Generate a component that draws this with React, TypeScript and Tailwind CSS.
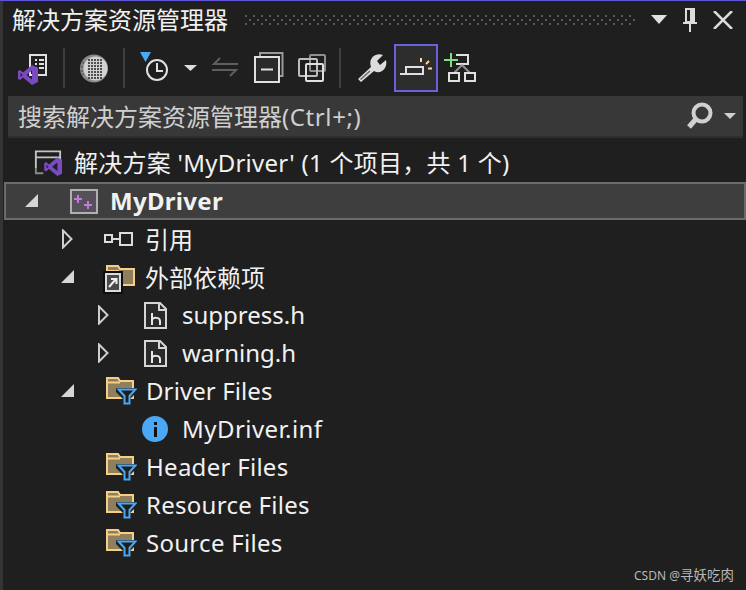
const FONT = "font-['Noto_Sans','Noto_Sans_CJK_SC',sans-serif]";

function VsLogo({ x, y, s = 1 }: { x: number; y: number; s?: number }) {
  return (
    <g transform={`translate(${x} ${y}) scale(${s})`} fill="#7a4bc0">
      <path d="M14 0 L20 3 V17 L14 20 L5 12.5 L2 15 L0 14 V6 L2 5 L5 7.5 Z M14 5.5 L8.5 10 L14 14.5 Z M2.5 8 V12 L4.5 10 Z" fillRule="evenodd" />
    </g>
  );
}

function Separator() {
  return <div className="h-[40px] w-[2px] bg-[#3f3f3f]" />;
}

function ToolIcon({ w, children }: { w: number; children: React.ReactNode }) {
  return (
    <svg width={w} height="48" viewBox={`0 0 ${w} 48`} fill="none" className="shrink-0">
      {children}
    </svg>
  );
}

function Toolbar() {
  return (
    <div className="flex h-[48px] items-center pl-[14px]">
      <ToolIcon w={36}>
        <path d="M16 11 H32 V31 H16 Z" fill="#1f1f1f" stroke="#e0e0e0" strokeWidth="2" />
        <path d="M21 16h2M25 16h5M21 20h2M25 20h5M21 24h2M25 24h5" stroke="#e0e0e0" strokeWidth="2" />
        <VsLogo x={4} y={21} />
      </ToolIcon>
      <div className="ml-[13px]"><Separator /></div>
      <div className="ml-[15px]">
        <ToolIcon w={30}>
          <circle cx="14" cy="24.500" r="14" fill="#8a8a8a" />
          <circle cx="15.500" cy="24.500" r="12" fill="#d2d2d2" />
          <path d="M3.500 18 A12 12 0 0 0 3.500 31" stroke="#5e5e5e" strokeWidth="2" strokeDasharray="2 2" />
          {[15, 18, 21, 24, 27, 30, 33].map((y) =>
            [8, 11, 14, 17, 20].map((x) => (
              <rect key={`${x}-${y}`} x={x} y={y} width="2" height="2" fill="#4f4f4f" />
            )),
          )}
        </ToolIcon>
      </div>
      <div className="ml-[13px]"><Separator /></div>
      <div className="ml-[15px]">
        <ToolIcon w={30}>
          <path d="M0 8 H11 L5.500 18 Z" fill="#4aa8f5" />
          <circle cx="17" cy="26" r="10" stroke="#e0e0e0" strokeWidth="2" />
          <path d="M17 19 V27 H23" stroke="#e0e0e0" strokeWidth="2" />
        </ToolIcon>
      </div>
      <div className="ml-[14px]">
        <ToolIcon w={13}>
          <path d="M0 21 H13 L6.500 27 Z" fill="#dcdcdc" />
        </ToolIcon>
      </div>
      <div className="ml-[14px]">
        <ToolIcon w={28}>
          <path d="M27 20 H3 L9 14 M1 26 H25 L19 32" stroke="#5f5f5f" strokeWidth="2" />
        </ToolIcon>
      </div>
      <div className="ml-[14px]">
        <ToolIcon w={32}>
          <path d="M7 13 V9 H29.500 V32 H26" stroke="#9a9a9a" strokeWidth="2" />
          <rect x="2" y="13" width="24" height="25" stroke="#e0e0e0" strokeWidth="2" fill="#2a2a2a" />
          <path d="M8 25.500 H20" stroke="#e0e0e0" strokeWidth="2" />
        </ToolIcon>
      </div>
      <div className="ml-[12px]">
        <ToolIcon w={30}>
          <rect x="13" y="11" width="15" height="16" rx="1" stroke="#8f8f8f" strokeWidth="2" />
          <rect x="2" y="15" width="18" height="17" rx="1" stroke="#bdbdbd" strokeWidth="2" />
          <rect x="9" y="20" width="17" height="17" rx="1" stroke="#e0e0e0" strokeWidth="2" />
        </ToolIcon>
      </div>
      <div className="ml-[12px]"><Separator /></div>
      <div className="ml-[14px]">
        <ToolIcon w={32}>
          <path d="M3 35 L16 23 C13 15 20 8 28 11 L22 17 L25 21 L31 16 C33 24 26 31 19 27 L6 38 Z" fill="#dcdcdc" />
          <path d="M5.500 35.500 L15 27" stroke="#6a6a6a" strokeWidth="1.500" />
        </ToolIcon>
      </div>
      <div className="ml-[7px] flex h-[48px] w-[44px] shrink-0 items-center justify-center border-2 border-[#6a5fe0] bg-[#2d2d2d]">
        <svg width="40" height="44" viewBox="0 0 40 44" fill="none">
          <path d="M4 28 H28" stroke="#e0e0e0" strokeWidth="2" />
          <path d="M10 27 V21 H27 V27" stroke="#e0e0e0" strokeWidth="2" />
          <path d="M25 12 V16" stroke="#ffd98c" strokeWidth="2" />
          <path d="M30 18 L33 15" stroke="#ffd98c" strokeWidth="2" />
          <path d="M32 22.500 H36" stroke="#ffd98c" strokeWidth="2" />
        </svg>
      </div>
      <div className="ml-[6px]">
        <ToolIcon w={34}>
          <path d="M7 9 V23 M0 16 H14" stroke="#7ee07e" strokeWidth="2" />
          <path d="M12 11 H24 V20 H12" stroke="#e0e0e0" strokeWidth="2" />
          <path d="M18 21 L10 29 M18 21 L26 29" stroke="#8f8f8f" strokeWidth="2" />
          <rect x="5" y="29" width="10" height="8" stroke="#e0e0e0" strokeWidth="2" />
          <rect x="21" y="29" width="10" height="8" stroke="#e0e0e0" strokeWidth="2" />
        </ToolIcon>
      </div>
    </div>
  );
}

function Arrow({ open }: { open?: boolean }) {
  if (open) {
    return (
      <svg width="14" height="14" viewBox="0 0 14 14">
        <path d="M0 13 H13 V0 Z" fill="#d6d6d6" />
      </svg>
    );
  }
  return (
    <svg width="11" height="20" viewBox="0 0 11 20" fill="none">
      <path d="M1 1.500 L9.500 10 L1 18.500 Z" stroke="#cfcfcf" strokeWidth="2" />
    </svg>
  );
}

function FilterFolder() {
  return (
    <svg width="31" height="30" viewBox="0 0 31 30" fill="none" className="-mr-[3px] shrink-0">
      <path d="M1 2 H12 L14 5 H27 V22 H1 Z" fill="#8f7f5c" stroke="#f5cf87" strokeWidth="2" />
      <path d="M2 6.500 H14" stroke="#f5cf87" strokeWidth="2" />
      <path d="M10 12 H31 V16 L24 23 V30 H17 V23 L10 16 Z" fill="#1f1f1f" />
      <path d="M12.500 13.500 H29.500 L23.500 20 V27.500 H18.500 V20 Z" fill="#1f1f1f" stroke="#4aa8f5" strokeWidth="2" />
    </svg>
  );
}

function HeaderFile() {
  return (
    <svg width="23" height="27" viewBox="0 0 23 27" fill="none" className="mr-[3px] shrink-0">
      <path d="M1 1 H16 L22 7 V26 H1 Z" fill="#2a2a2a" stroke="#d6d6d6" strokeWidth="2" />
      <path d="M15 1 V8 H22" stroke="#d6d6d6" strokeWidth="2" />
      <path d="M8 11 V23 M8 18 C9 15 16 15 16 19 V23" stroke="#e8e8e8" strokeWidth="2" />
    </svg>
  );
}

const TEXT = "ml-[12px] text-[24px] leading-[38px] text-[#f1f1f1] whitespace-pre";

function Row({
  lead,
  arrow,
  icon,
  text,
  textClass,
  selected,
}: {
  lead: string;
  arrow?: React.ReactNode;
  icon: React.ReactNode;
  text: string;
  textClass: string;
  selected?: boolean;
}) {
  return (
    <div
      className={
        selected
          ? "ml-[4px] flex h-[38px] items-center border-2 border-[#6b6b6b] bg-[#3e3e3e]"
          : "ml-[4px] flex h-[38px] items-center"
      }
    >
      <div className={lead}>{arrow}</div>
      {icon}
      <span className={`${TEXT} ${textClass}`}>{text}</span>
    </div>
  );
}

const FILES = ["Header Files", "Resource Files", "Source Files"];

export default function App() {
  return (
    <div className={`relative h-[590px] w-[746px] overflow-hidden border-t border-[#5f55d8] bg-[#1f1f1f] ${FONT}`}>
      <div className="absolute bottom-0 left-0 top-0 w-[3px] bg-[#343434]" />

      <div className="flex h-[37px] items-center pl-[12px]">
        <span className="text-[24px] leading-[38px] text-[#f1f1f1]">解决方案资源管理器</span>
        <svg width="390" height="10" className="ml-[17px]">
          <defs>
            <pattern id="grip" width="8" height="8" patternUnits="userSpaceOnUse">
              <rect x="0" y="0" width="2" height="2" fill="#5a5a5a" />
              <rect x="4" y="4" width="2" height="2" fill="#5a5a5a" />
            </pattern>
          </defs>
          <rect width="390" height="10" fill="url(#grip)" />
        </svg>
        <svg width="16" height="10" viewBox="0 0 16 10" className="ml-[16px]">
          <path d="M0 0 H16 L8 9 Z" fill="#e0e0e0" />
        </svg>
        <svg width="16" height="24" viewBox="0 0 16 24" fill="none" className="ml-[15px]">
          <path d="M4 1 H12 V14 H4 Z" stroke="#dcdcdc" strokeWidth="2" />
          <path d="M9.500 2 V14" stroke="#dcdcdc" strokeWidth="3" />
          <path d="M1 15 H15 M8 15 V24" stroke="#dcdcdc" strokeWidth="2" />
        </svg>
        <svg width="20" height="18" viewBox="0 0 20 18" fill="none" className="ml-[15px]">
          <path d="M1 0 L19 18 M19 0 L1 18" stroke="#dcdcdc" strokeWidth="2.500" />
        </svg>
      </div>

      <div className="mt-[6px]"><Toolbar /></div>

      <div className="ml-[8px] mt-[4px] flex h-[42px] w-[735px] items-center border-b-2 border-[#2e2e2e] bg-[#383838] pl-[10px]">
        <span className="flex-1 translate-y-px text-[24px] text-[#cfcfcf]">
          搜索解决方案资源管理器<span className="tracking-[0.6px]">(Ctrl+;)</span>
        </span>
        <svg width="28" height="28" viewBox="0 0 28 28" fill="none">
          <circle cx="16" cy="11" r="8.500" stroke="#d0d0d0" strokeWidth="4" />
          <path d="M10 17 L3 25" stroke="#d0d0d0" strokeWidth="5" />
        </svg>
        <svg width="12" height="6" viewBox="0 0 12 6" className="ml-[10px] mr-[7px]">
          <path d="M0 0 H12 L6 6 Z" fill="#d0d0d0" />
        </svg>
      </div>

      <div className="mt-[6px]">
        <Row
          lead="w-[30px]"
          icon={
            <svg width="28" height="28" viewBox="0 0 30 28" fill="none" className="shrink-0">
              <path d="M2 20 V1.500 H28 V12 M2 8 H28" stroke="#c4c4c4" strokeWidth="2" />
              <path d="M2 20 V25 H10" stroke="#8a8a8a" strokeWidth="2" />
              <VsLogo x={11} y={8} />
            </svg>
          }
          text="解决方案 'MyDriver' (1 个项目，共 1 个)"
          textClass="tracking-[0.25px]"
        />
        <Row
          selected
          lead="flex w-[64px] pl-[19px]"
          arrow={<Arrow open />}
          icon={
            <svg width="28" height="25" viewBox="0 0 28 25" fill="none" className="shrink-0">
              <rect x="1" y="1" width="26" height="23" fill="#55505a" stroke="#b0b0b0" strokeWidth="2" />
              <path d="M8 6 V14 M4 10 H12 M18 12 V20 M14 16 H22" stroke="#c27bd8" strokeWidth="2" />
            </svg>
          }
          text="MyDriver"
          textClass="font-bold tracking-[0.3px]"
        />
        <Row
          lead="flex w-[100px] items-center pl-[58px]"
          arrow={<Arrow />}
          icon={
            <svg width="30" height="14" viewBox="0 0 30 14" fill="none" className="shrink-0">
              <rect x="1" y="3" width="7" height="7" stroke="#dcdcdc" strokeWidth="2" />
              <path d="M8 7 H15" stroke="#dcdcdc" strokeWidth="2" />
              <rect x="16" y="1" width="12" height="12" stroke="#dcdcdc" strokeWidth="2" />
            </svg>
          }
          text="引用"
          textClass="-translate-x-px translate-y-px"
        />
        <Row
          lead="flex w-[100px] items-center pl-[57px]"
          arrow={<Arrow open />}
          icon={
            <svg width="30" height="30" viewBox="0 0 30 30" fill="none" className="shrink-0 overflow-visible">
              <path d="M3 4 H14 L16 7 H30 V23 H3 Z" fill="#8f7f5c" stroke="#f5cf87" strokeWidth="2" />
              <path d="M3 9 H15" stroke="#f5cf87" strokeWidth="2" />
              <rect x="-1" y="9" width="20" height="23" fill="#0d0d0d" />
              <rect x="2" y="12" width="14" height="17" fill="#4a4a4a" stroke="#dcdcdc" strokeWidth="2" />
              <path d="M5 25 L12 17 M7 17 H12.500 V22" stroke="#f0f0f0" strokeWidth="2" />
            </svg>
          }
          text="外部依赖项"
          textClass="-translate-x-px translate-y-px"
        />
        {["suppress.h", "warning.h"].map((f) => (
          <Row
            key={f}
            lead="flex w-[140px] items-center pl-[94px]"
            arrow={<Arrow />}
            icon={<HeaderFile />}
            text={f}
            textClass="tracking-normal"
          />
        ))}
        <Row
          lead="flex w-[102px] items-center pl-[57px]"
          arrow={<Arrow open />}
          icon={<FilterFolder />}
          text="Driver Files"
          textClass="tracking-[0.1px]"
        />
        <Row
          lead="w-[138px]"
          icon={
            <div className="mr-[2px] flex h-[26px] w-[26px] shrink-0 items-center justify-center rounded-full bg-[#4aa8f5]">
              <div className="flex flex-col items-center gap-[2px]">
                <div className="h-[3px] w-[3px] bg-[#111]" />
                <div className="h-[10px] w-[3px] bg-[#111]" />
              </div>
            </div>
          }
          text="MyDriver.inf"
          textClass="tracking-[0.45px]"
        />
        {FILES.map((f) => (
          <Row key={f} lead="w-[102px]" icon={<FilterFolder />} text={f} textClass="tracking-[0.28px]" />
        ))}
      </div>

      <div className="absolute bottom-[5px] right-[12px] text-[13.5px] leading-[18px] text-[#b8b8b8]">
        <span className="text-[12px]">CSDN @</span>寻妖吃肉
      </div>
    </div>
  );
}
